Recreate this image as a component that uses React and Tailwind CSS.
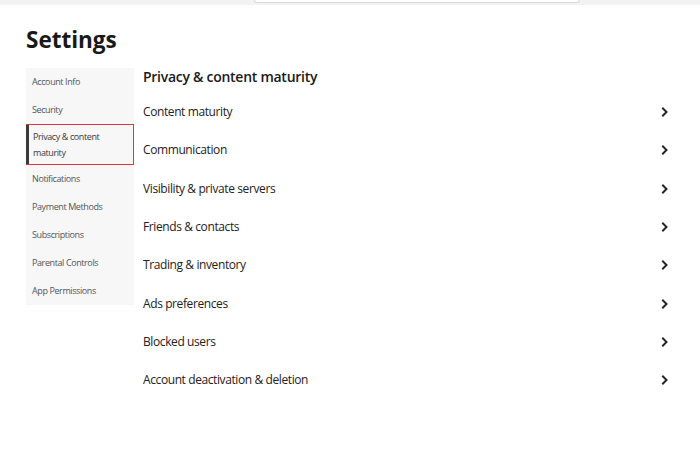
/**
 * Settings page - privacy section
 */

const navItems = [
  "Account Info",
  "Security",
  "Privacy & content maturity",
  "Notifications",
  "Payment Methods",
  "Subscriptions",
  "Parental Controls",
  "App Permissions",
];

const rows = [
  "Content maturity",
  "Communication",
  "Visibility & private servers",
  "Friends & contacts",
  "Trading & inventory",
  "Ads preferences",
  "Blocked users",
  "Account deactivation & deletion",
];

function Chevron() {
  return (
    <svg className="w-[10px] h-[10px] text-[#232527]" viewBox="0 0 10 10" fill="none" stroke="currentColor" aria-hidden="true">
      <path d="M3 1.5 6.5 5 3 8.5" strokeWidth={2} strokeLinecap="square" />
    </svg>
  );
}

function Sidebar({ active }) {
  return (
    <ul className="w-[108px] shrink-0 bg-[#f7f7f7] self-start tracking-[-0.4px]">
      {navItems.map((item) =>
        item === active ? (
          <li
            key={item}
            className="relative h-[41px] flex items-center pl-[6px] pr-2 border border-[#e2363b] text-[9px] leading-[16px] font-medium text-[#393b3d]"
          >
            <span className="absolute -left-px top-0 bottom-0 w-[3px] bg-[#393b3d]"></span>
            <span>Privacy &amp; content maturity</span>
          </li>
        ) : (
          <li key={item} className="h-[28px] flex items-center pl-[6px] text-[9px] font-medium text-[#52555b]">
            {item}
          </li>
        )
      )}
    </ul>
  );
}

export default function App() {
  return (
    <div className="w-[700px] h-[450px] bg-white overflow-hidden" style={{ fontFamily: '"Open Sans", "Noto Sans", sans-serif' }}>
      <div className="h-[5px] bg-[#f2f2f2]">
        <div className="ml-[254px] w-[326px] h-[3px] bg-white border-b border-x border-[#d9d9d9] rounded-b-[3px]"></div>
      </div>

      <div className="px-[26px] pt-[21px]">
        <h1 className="text-[22.5px] leading-[28px] font-bold text-[#191919]">Settings</h1>

        <div className="flex mt-[14px]">
          <Sidebar active="Privacy & content maturity" />

          <div className="ml-[9px] w-[527px]">
            <h2 className="text-[14px] leading-[18px] font-semibold text-[#191919] tracking-[-0.27px]">Privacy &amp; content maturity</h2>
            <ul className="mt-[7px]">
              {rows.map((row) => (
                <li key={row} className="h-[38.3px] flex items-center justify-between text-[12px] font-medium text-[#1f2022] tracking-[-0.4px]">
                  <span>{row}</span>
                  <Chevron />
                </li>
              ))}
            </ul>
          </div>
        </div>
      </div>
    </div>
  );
}
